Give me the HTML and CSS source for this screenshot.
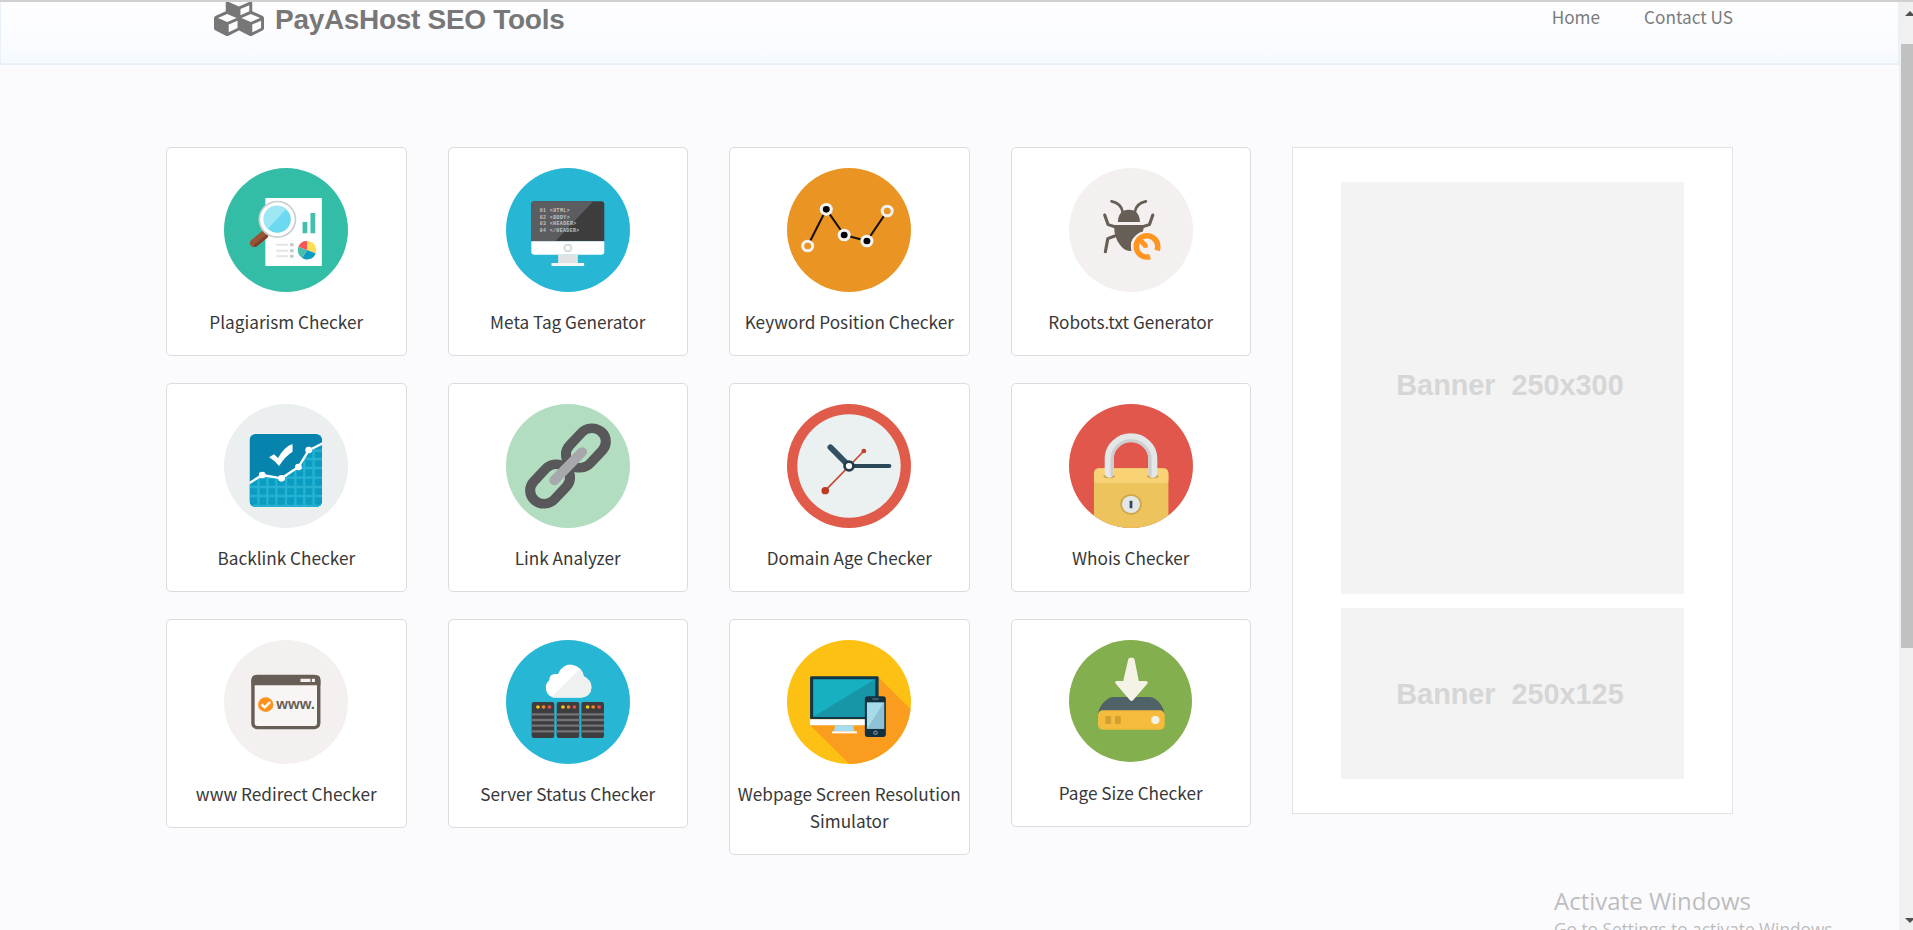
FILE: index.html
```html
<!DOCTYPE html>
<html lang="en">
<head>
<meta charset="utf-8">
<title>PayAsHost SEO Tools</title>
<link rel="stylesheet" href="styles.css">
</head>
<body>
<div class="window">
<div class="page">
<header class="header">
  <a class="brand">
    <svg class="logo" viewBox="0 313 2176 1479" preserveAspectRatio="none"><path fill="#777" d="M640 1632l384-192v-314l-384 164v342zm-64-454l404-173-404-173-404 173zm1088 454l384-192v-314l-384 164v342zm-64-454l404-173-404-173-404 173zm-448-293l384-165v-266l-384 164v267zm-64-379l441-189-441-189-441 189zm1088 518v416q0 36-19 67t-52 47l-448 224q-25 14-57 14t-57-14l-448-224q-4-2-7-4-2 2-7 4l-448 224q-25 14-57 14t-57-14l-448-224q-33-16-52-47t-19-67v-416q0-38 21.5-70t56.5-48l434-186v-400q0-38 21.500-70t56.500-48l448-192q23-10 50-10t50 10l448 192q35 16 56.500 48t21.500 70v400l434 186q36 16 57 48t21 70z"/></svg>
    <span class="brand-name">PayAsHost SEO Tools</span>
  </a>
  <nav class="nav"><a>Home</a><a>Contact US</a></nav>
</header>
<main class="main">
<div class="tools">
  <a class="card">
    <svg class="icon" viewBox="186 84 360 372" preserveAspectRatio="none">
      <ellipse cx="366" cy="270" rx="180" ry="186" fill="#34bda6"/>
      <path fill="#fff" d="M306 174h164v204H306z"/>
      <path fill="#44bfac" d="M414 246h14v34h-14zM437 219h14v61h-14z"/>
      <path d="M338 314h34M338 332h34M338 349h34" stroke="#e3e6e6" stroke-width="6"/>
      <path d="M378 314h10M378 332h10M378 349h10" stroke="#c2c7c7" stroke-width="9"/>
      <path fill="#fcdf56" d="M427 330V303a26 27 0 0 1 25 37z"/>
      <path fill="#0e9cc1" d="M427 330l25 10a26 28 0 0 1-39 14z"/>
      <path fill="#44bfac" d="M427 330l-14 24a27 28 0 0 1-11-34z"/>
      <path fill="#fb5558" d="M427 330l-25-10a26 28 0 0 1 25-17z"/>
      <path d="M304 283L273 309" stroke="#9a5435" stroke-width="24" stroke-linecap="round"/>
      <path d="M309 290L278 316" stroke="#7f4029" stroke-width="9" stroke-linecap="round"/>
      <ellipse cx="341" cy="238" rx="55" ry="56" fill="#c9cfd1"/>
      <ellipse cx="341" cy="238" rx="50" ry="51" fill="#fff"/>
      <ellipse cx="341" cy="238" rx="39" ry="40" fill="#6dd9f0"/>
      <path fill="#9de6f4" d="M367 207a39 40 0 0 0-54 60z"/>
    </svg>
    <span class="name">Plagiarism Checker</span>
  </a>
  <a class="card">
    <svg class="icon" viewBox="1005 84 357 372" preserveAspectRatio="none">
      <ellipse cx="1183.500" cy="270" rx="178.500" ry="186" fill="#28b6d5"/>
      <path fill="#3d3d3d" d="M1078 304V193q0-9 9-9h192q9 0 9 9v111z"/>
      <path fill="#5c5d60" d="M1078 304V193q0-9 9-9h169L1147 304z"/>
      <path fill="#fff" d="M1078 304h210v32q0 8-9 8h-192q-9 0-9-8z"/>
      <circle cx="1183" cy="324" r="10" fill="none" stroke="#cfd4d5" stroke-width="5"/>
      <path fill="#dfe3e4" d="M1155 344h57v25h-57z"/>
      <path fill="#f5f7f7" d="M1136 369h94v9h-94z"/>
      <g class="code"><text x="1102" y="217" textLength="86">01 &lt;HTML&gt;</text><text x="1102" y="237" textLength="86">02 &lt;BODY&gt;</text><text x="1102" y="256" textLength="105">03 &lt;HEADER&gt;</text><text x="1102" y="276" textLength="114">04 &lt;/HEADER&gt;</text></g>
    </svg>
    <span class="name">Meta Tag Generator</span>
  </a>
  <a class="card">
    <svg class="icon" viewBox="195 84 360 372" preserveAspectRatio="none">
      <ellipse cx="375" cy="270" rx="180" ry="186" fill="#ea9423"/>
      <path d="M255 318L309 208L361 285L427 303L486 213" fill="none" stroke="#15100a" stroke-width="6"/>
      <g fill="#ea9423" stroke="#f1f1f1" stroke-width="9"><circle cx="255" cy="318" r="14.500"/><circle cx="486" cy="213" r="14.500"/></g>
      <g fill="#050505" stroke="#f4f4f4" stroke-width="9"><circle cx="309" cy="208" r="14.500"/><circle cx="361" cy="285" r="14.500"/><circle cx="427" cy="303" r="14.500"/></g>
    </svg>
    <span class="name">Keyword Position Checker</span>
  </a>
  <a class="card">
    <svg class="icon" viewBox="1013 84 358 372" preserveAspectRatio="none">
      <ellipse cx="1192" cy="270" rx="179" ry="186" fill="#f4f0f0"/>
      <g fill="none" stroke="#675e56" stroke-linecap="round" stroke-linejoin="round" stroke-width="8"><path d="M1136 184q28 6 32 32M1235 184q-28 6-32 32"/><path stroke-width="9" d="M1116 225l10 29 22 7M1255 225l-10 29-22 7M1145 288l-20 8-7 39"/></g>
      <path fill="#675e56" d="M1154 246q0-23 15-33 17-8 34 0 15 10 15 33zM1144 255h84q2 17-6 26-16 2-25 16-9 15-3 35-18 4-33-16-20-26-17-61z"/>
      <circle cx="1236" cy="318" r="44" fill="#f4f0f0"/>
      <path d="M1267 331A31 32 0 1 0 1247 350" fill="none" stroke="#ff9420" stroke-width="16"/>
      <path d="M1214 297l19 18" stroke="#ff9420" stroke-width="14" stroke-linecap="round"/>
      <path fill="#ff9420" d="M1224 314h16v9h-12z"/>
    </svg>
    <span class="name">Robots.txt Generator</span>
  </a>
  <a class="card">
    <svg class="icon" viewBox="186 72 360 372" preserveAspectRatio="none">
      <defs><clipPath id="chart"><rect x="260" y="162" width="211" height="219" rx="18"/></clipPath></defs>
      <ellipse cx="366" cy="258" rx="180" ry="186" fill="#ebeff0"/>
      <g clip-path="url(#chart)">
        <path fill="#0784ad" d="M260 162h211v219H260z"/>
        <clipPath id="area"><path d="M260 309l37-24 56 10 49-34 30-50 39-20v190H260z"/></clipPath>
        <g clip-path="url(#area)"><path fill="#0a9cc1" d="M260 162h211v219H260z"/>
        <path stroke="#25b1d1" stroke-width="7" d="M286 162v219M312 162v219M338 162v219M366 162v219M393 162v219M419 162v219M446 162v219M260 212h211M260 237h211M260 264h211M260 293h211M260 321h211M260 348h211M260 378h211"/></g>
        <path d="M257 311l40-26 56 10 49-34 30-50 41-21" fill="none" stroke="#fff" stroke-width="7"/>
      </g>
      <g fill="#fff"><circle cx="297" cy="285" r="10"/><circle cx="353" cy="295" r="10"/><circle cx="402" cy="261" r="10"/><circle cx="432" cy="210" r="10"/><path d="M317 232l14-9 12 11q18-34 42-42v23q-22 14-39 43-14-17-29-26z"/></g>
    </svg>
    <span class="name">Backlink Checker</span>
  </a>
  <a class="card">
    <svg class="icon" viewBox="1005 72 357 372" preserveAspectRatio="none">
      <ellipse cx="1183.500" cy="258" rx="178.500" ry="186" fill="#b2ddc1"/>
      <g fill="none" stroke="#58585a" stroke-width="29"><rect x="-66" y="-40" width="132" height="80" rx="40" transform="translate(1235 204) rotate(-48)"/><rect x="-66" y="-40" width="132" height="80" rx="40" transform="translate(1132 312) rotate(-48)"/></g>
      <path d="M1144 301L1224 216" stroke="#a7a8ac" stroke-width="29" stroke-linecap="round"/>
    </svg>
    <span class="name">Link Analyzer</span>
  </a>
  <a class="card">
    <svg class="icon" viewBox="195 72 360 372" preserveAspectRatio="none">
      <ellipse cx="375" cy="258" rx="180" ry="186" fill="#e15b4a"/>
      <ellipse cx="375" cy="258" rx="150" ry="155" fill="#ebf0f1"/>
      <path d="M306 332L418 213" stroke="#ca4a36" stroke-width="5"/>
      <circle cx="306" cy="332" r="11" fill="#bd3924"/><circle cx="418" cy="213" r="7" fill="#c53f2a"/>
      <path d="M321 202L370 253" stroke="#32505f" stroke-width="17" stroke-linecap="round"/>
      <path d="M385 258h107" stroke="#2b4858" stroke-width="12" stroke-linecap="round"/>
      <circle cx="375" cy="258" r="13" fill="#fff" stroke="#263c4d" stroke-width="8"/>
    </svg>
    <span class="name">Domain Age Checker</span>
  </a>
  <a class="card">
    <svg class="icon" viewBox="1013 72 358 372" preserveAspectRatio="none">
      <defs><clipPath id="disc"><ellipse cx="1192" cy="258" rx="179" ry="186"/></clipPath></defs>
      <g clip-path="url(#disc)">
        <path fill="#e2574c" d="M1013 72h358v372h-358z"/>
        <rect x="1085" y="265" width="215" height="200" rx="16" fill="#ecc35c"/>
        <path fill="#f8d275" d="M1085 281q0-16 16-16h183q16 0 16 16v20q0 9-14 9h-187q-14 0-14-9z"/>
      </g>
      <g fill="#c9a349"><ellipse cx="1129" cy="289" rx="17" ry="6"/><ellipse cx="1255" cy="289" rx="17" ry="6"/></g>
      <path d="M1129 280v-44a63 63 0 0 1 126 0v44" fill="none" stroke="#e4e7e7" stroke-width="26" stroke-linecap="round"/>
      <path d="M1137 288v-50a55 56 0 0 1 110 0v50" fill="none" stroke="#cbcfcf" stroke-width="9"/>
      <circle cx="1192" cy="373" r="31" fill="#cda648"/><circle cx="1192" cy="373" r="26" fill="#e4e7e7"/>
      <rect x="1188" y="362" width="8" height="23" rx="2" fill="#344a5b"/>
    </svg>
    <span class="name">Whois Checker</span>
  </a>
  <a class="card">
    <svg class="icon" viewBox="186 90 360 372" preserveAspectRatio="none">
      <ellipse cx="366" cy="276" rx="180" ry="186" fill="#f4f0f0"/>
      <rect x="270" y="199" width="191" height="154" rx="13" fill="#f8f5f4" stroke="#675e56" stroke-width="10"/>
      <path fill="#675e56" d="M266 226v-17q0-13 13-13h174q13 0 13 13v17z"/>
      <path fill="#f4f0f0" d="M408 206h29v10h-29zM441 206h9v10h-9z"/>
      <circle cx="307" cy="284" r="22" fill="#ff921d"/>
      <path d="M295 283l9 9 16-16" fill="none" stroke="#fff" stroke-width="7"/>
      <text class="www" x="338" y="297" textLength="112" lengthAdjust="spacingAndGlyphs">www.</text>
    </svg>
    <span class="name">www Redirect Checker</span>
  </a>
  <a class="card">
    <svg class="icon" viewBox="1005 90 357 372" preserveAspectRatio="none">
      <defs>
        <clipPath id="cloud"><path d="M1142 263a31 31 0 0 1-12-53q-2-20 25-18a38 40 0 0 1 74 7q23 12 22 35-3 26-30 29z"/></clipPath>
        <g id="rack"><rect x="0" y="276" width="65" height="108" rx="6" fill="#3d3d3f"/><path d="M0 313h65M0 330h65M0 347h65M0 364h65" stroke="#747477" stroke-width="7"/><circle cx="18" cy="291" r="5.500" fill="#f3c614"/><circle cx="34" cy="291" r="5.500" fill="#ee8830"/><circle cx="51" cy="291" r="5.500" fill="#e84b50"/></g>
      </defs>
      <ellipse cx="1183.500" cy="276" rx="178.500" ry="186" fill="#28b6d5"/>
      <g clip-path="url(#cloud)"><path fill="#fff" d="M1105 160h150v110h-150z"/><path fill="#eff1f1" d="M1218 176L1134 263v10h125v-97z"/></g>
      <use href="#rack" x="1079"/><use href="#rack" x="1151"/><use href="#rack" x="1222"/>
    </svg>
    <span class="name">Server Status Checker</span>
  </a>
  <a class="card">
    <svg class="icon" viewBox="195 90 360 372" preserveAspectRatio="none">
      <defs><clipPath id="sun"><ellipse cx="375" cy="276" rx="180" ry="186"/></clipPath></defs>
      <g clip-path="url(#sun)"><path fill="#fdc113" d="M195 90h360v372H195z"/><path fill="#fa9d1e" d="M459 200L560 304v170H388L262 346z"/></g>
      <rect x="262" y="199" width="199" height="129" rx="4" fill="#123746"/>
      <path fill="#17b0c2" d="M271 208h180v112H271z"/><path fill="#1896a8" d="M451 208v112H271z"/>
      <path fill="#fff" d="M262 328h199v18H262z"/>
      <path fill="#a5dcee" d="M335 346h52l3 18h-59z"/><path fill="#fff" d="M326 364h72v6h-72z"/>
      <rect x="421" y="259" width="61" height="122" rx="8" fill="#123040"/>
      <path fill="#a6dbea" d="M427 277h50v79h-50z"/><path fill="#8fc1d6" d="M477 277v79h-50z"/>
      <path d="M443 267h18" stroke="#5d727d" stroke-width="4"/><circle cx="452" cy="368" r="5" fill="none" stroke="#8d9ca4" stroke-width="3"/>
    </svg>
    <span class="name">Webpage Screen Resolution Simulator</span>
  </a>
  <a class="card">
    <svg class="icon icon-short" viewBox="1013 90 356 366" preserveAspectRatio="none">
      <ellipse cx="1191" cy="273" rx="178" ry="183" fill="#84af4e"/>
      <path fill="#4f6268" d="M1097 312q4-29 28-45 6-6 18-6h102q12 0 18 6 22 16 27 45z"/>
      <rect x="1097" y="301" width="193" height="58" rx="14" fill="#f4bb3d"/>
      <rect x="1118" y="318" width="17" height="24" rx="4" fill="#d39f30"/><rect x="1146" y="318" width="17" height="24" rx="4" fill="#d39f30"/>
      <circle cx="1263" cy="330" r="12" fill="#f5f3e4"/>
      <path fill="#f5f3e6" d="M1184 150q1-7 6-7h7q5 0 6 7l12 63h20q9 1 4 9l-40 48q-5 6-10 0l-40-48q-6-8 3-9h18z"/>
    </svg>
    <span class="name">Page Size Checker</span>
  </a>
</div>
<aside class="side">
  <div class="banner banner-tall">Banner&nbsp; 250x300</div>
  <div class="banner banner-low">Banner&nbsp; 250x125</div>
</aside>
</main>
</div>
<div class="scrollbar">
  <svg class="arrow" viewBox="0 0 10 5"><path fill="#505050" d="M0 5l5-5 5 5z"/></svg>
  <div class="thumb"></div>
  <svg class="arrow arrow-down" viewBox="0 0 10 5"><path fill="#505050" d="M0 0l5 5 5-5z"/></svg>
</div>
<div class="watermark"><div class="wm-title">Activate Windows</div><div class="wm-sub">Go to Settings to activate Windows.</div></div>
</div>
</body>
</html>
```
FILE: styles.css
```css
* { box-sizing: border-box; }
body { margin: 0; background: #fbfbfe; }
.window {
  position: relative;
  display: flex;
  width: 1913px;
  height: 930px;
  overflow: hidden;
  border-top: 2px solid #d0d0d0;
  font-family: "Noto Sans CJK SC", "Noto Sans", sans-serif;
}
.page { flex: 1; min-width: 0; }
.header {
  display: flex;
  justify-content: space-between;
  height: 63px;
  padding: 0 165px 0 213px;
  border: solid #e8f0f8;
  border-width: 0 1px 2px;
  background: linear-gradient(#fefeff, #fbfcff 50%, #f5faff);
}
.brand { display: flex; gap: 11px; height: 34px; }
.logo { width: 50px; height: 34px; }
.brand-name {
  font: bold 28px/36px "Liberation Sans", Arial, sans-serif;
  letter-spacing: -0.300px;
  color: #777;
  white-space: nowrap;
}
.nav {
  display: flex;
  gap: 44px;
  font-size: 17.200px;
  line-height: 30px;
  color: #7b7b7b;
  white-space: nowrap;
}
.main {
  display: flex;
  align-items: flex-start;
  gap: 41px;
  padding: 82px 0 0 166px;
}
.tools {
  display: grid;
  grid-template-columns: repeat(4, 240.500px);
  column-gap: 41px;
  row-gap: 28px;
  grid-auto-rows: 208px;
  align-items: start;
}
.card {
  display: flex;
  flex-direction: column;
  align-items: center;
  gap: 16px;
  padding: 20px 3px;
  border: 1px solid #dcdcde;
  border-radius: 5px;
  background: #fff;
}
.icon { display: block; width: 124px; height: 124px; }
.icon-short { width: 123px; height: 122px; margin-bottom: 1px; }
.name {
  font-size: 17.200px;
  line-height: 27px;
  color: #383838;
  text-align: center;
}
.code {
  font-family: "Liberation Mono", monospace;
  font-size: 14px;
  font-weight: bold;
  fill: #c5c5c7;
}
.www {
  font-family: "Liberation Sans", Arial, sans-serif;
  font-size: 44px;
  font-weight: bold;
  fill: #675e56;
}
.side {
  display: flex;
  flex-direction: column;
  gap: 14px;
  width: 441px;
  height: 667px;
  padding: 34px 48px;
  border: 1px solid #e1e2e5;
  background: #fff;
}
.banner {
  display: flex;
  align-items: center;
  justify-content: center;
  padding-right: 5px;
  background: #f3f3f3;
  color: #d6d6d6;
  font: bold 28.800px/34px "Liberation Sans", Arial, sans-serif;
  white-space: pre;
}
.banner-tall { height: 413px; padding-bottom: 6px; }
.banner-low { height: 172px; padding-top: 2px; }
.scrollbar {
  display: flex;
  flex-direction: column;
  width: 14px;
  padding: 9px 0 7px 2px;
  overflow: hidden;
  background: #f0f0f0;
}
.arrow { flex: none; width: 10px; height: 5px; margin-left: 4px; }
.thumb { height: 604px; margin-top: 28px; background: #c1c1c1; }
.arrow-down { margin-top: auto; }
.watermark {
  position: absolute;
  left: 1554px;
  top: 882px;
  font-family: "Open Sans", "Noto Sans", sans-serif;
  color: #bdbdbf;
  white-space: nowrap;
}
.wm-title { font-size: 24px; line-height: 34px; }
.wm-sub { font-size: 17.300px; line-height: 24px; }
```
